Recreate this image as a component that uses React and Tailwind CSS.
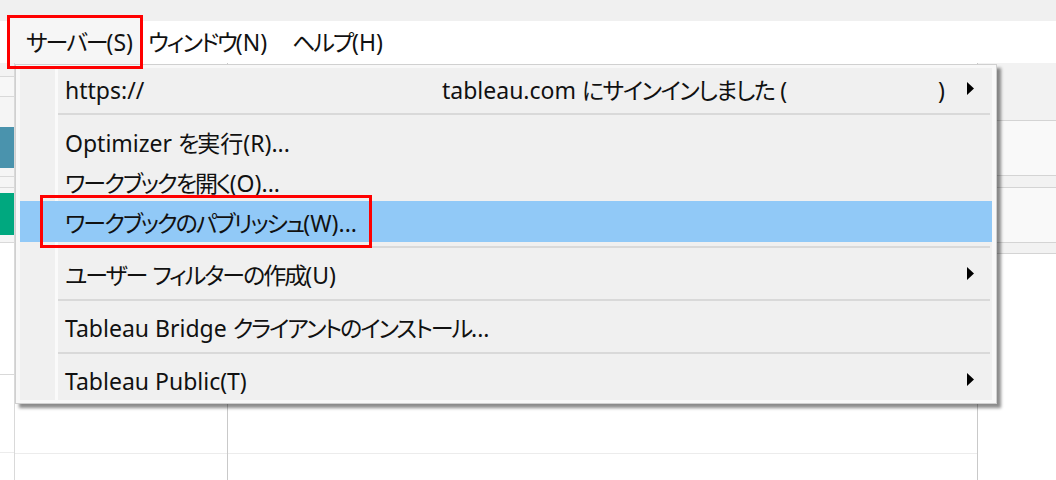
const Arrow = () => (
  <svg width="8" height="13" viewBox="0 0 8 13" className="ml-auto mr-[17px] shrink-0">
    <polygon points="0,0 7,6.5 0,13" fill="#000" />
  </svg>
);

// kana in the Windows UI font sit tighter than Noto's full-width ones
const J = ({ children }) => <span className="tracking-[-2px]">{children}</span>;

const Gutter = () => (
  <>
    <div className="w-[35px] self-stretch shrink-0" />
    <div className="w-[3px] self-stretch shrink-0 bg-[#fafafa]" />
  </>
);

const Item = ({ children, h, sub, active }) => (
  <div className={`flex items-center ${h} ${active ? "bg-[#91c9f7]" : ""}`}>
    {active ? <div className="w-[38px] shrink-0" /> : <Gutter />}
    <span className="pl-[7px] pt-[3px] whitespace-nowrap">{children}</span>
    {sub && <Arrow />}
  </div>
);

const Sep = ({ h, pt }) => (
  <div className={`flex ${h}`}>
    <Gutter />
    <div className={`flex-1 ${pt} pr-[2px]`}>
      <div className="h-[2px] bg-[#d9d9d9]" />
    </div>
  </div>
);

export default function App() {
  return (
    <div className="relative w-[1056px] h-[480px] overflow-hidden bg-white text-[23px] leading-none text-[#111] font-['Noto_Sans','Noto_Sans_CJK_JP',sans-serif] [font-feature-settings:'palt']">
      <div className="h-[21px] bg-[#f0f0f0]" />

      {/* menu bar */}
      <div className="flex h-[42px] items-center bg-white">
        <span className="-ml-[8px] w-[8px] overflow-hidden text-[#1d3b6e]">)</span>
        <div className="ml-[10px] flex h-[48px] items-center bg-[#f6f6f6] pl-[16px] pr-[10px]">
          <J>サーバー</J>(S)
        </div>
        <span className="ml-[5px]">
          <J>ウィンドウ</J>(N)
        </span>
        <span className="ml-[25px]">
          <J>ヘルプ</J>(H)
        </span>
      </div>

      {/* app body behind the menu */}
      <div className="flex h-[417px]">
        <div className="flex w-[15px] flex-col border-r border-[#d9d9d9]">
          <div className="h-[14px] border-b border-[#d9d9d9] bg-[#f3f3f3]" />
          <div className="h-[20px] border-b border-[#d9d9d9] bg-[#f7f7f7]" />
          <div className="h-[30px] bg-[#f5f5f5]" />
          <div className="h-[41px] bg-[#4a93ad]" />
          <div className="h-[9px] border-b border-[#d9d9d9] bg-[#f5f5f5]" />
          <div className="h-[11px] border-b border-[#d9d9d9] bg-[#f5f5f5]" />
          <div className="h-[5px] bg-[#f5f5f5]" />
          <div className="h-[42px] bg-[#00a87f]" />
          <div className="h-[8px] border-b border-[#d9d9d9] bg-[#f5f5f5]" />
          <div className="h-[132px] border-b border-[#d9d9d9] bg-white" />
          <div className="h-[78px] border-b border-[#ececec] bg-white" />
        </div>
        <div className="w-[213px] border-r border-[#c9c9c9]">
          <div className="h-[391px] border-b border-[#ececec]" />
        </div>
        <div className="w-[750px] border-r border-[#c9c9c9]">
          <div className="h-[391px] border-b border-[#ececec]" />
        </div>
        <div className="flex flex-1 flex-col">
          <div className="h-[58px] border-b border-[#d4d4d4] bg-[#f2f2f2]" />
          <div className="h-[55px] border-b border-[#d4d4d4] bg-[#f9f9f9]" />
          <div className="h-[12px] border-b border-[#d4d4d4] bg-[#f2f2f2]" />
          <div className="h-[55px] border-b border-[#d4d4d4] bg-[#f9f9f9]" />
          <div className="h-[11px] border-b border-[#d4d4d4] bg-[#f2f2f2]" />
        </div>
      </div>

      {/* server dropdown */}
      <div className="absolute left-[15px] top-[64px] w-[982px] border border-[#d0d0d0] bg-[#f8f8f8] px-[4px] py-[3px] shadow-[4px_4px_3px_rgba(0,0,0,0.45)]">
        <div className="flex flex-col bg-[#f0f0f0]">
          <div className="flex h-[41px] items-center">
            <Gutter />
            <span className="w-[384px] shrink-0 pl-[7px] pt-[3px]">https://</span>
            <span className="w-[496px] shrink-0 pt-[3px] whitespace-nowrap">
              tableau.com <span className="tracking-[-1.5px]">にサインインしました</span> (
            </span>
            <span className="pt-[3px]">)</span>
            <Arrow />
          </div>
          <Sep h="h-[12px]" pt="pt-[4px]" />
          <Item h="h-[41px]">
            Optimizer <J>を</J>実行(R)...
          </Item>
          <Item h="h-[39px]">
            <J>ワークブックを開く</J>(O)...
          </Item>
          <Item h="h-[41px]" active>
            <J>ワークブックのパブリッシュ</J>(W)...
          </Item>
          <Sep h="h-[11px]" pt="pt-[4px]" />
          <Item h="h-[41px]" sub>
            <J>ユーザー</J> <J>フィルターの作成</J>(U)
          </Item>
          <Sep h="h-[12px]" pt="pt-[5px]" />
          <Item h="h-[41px]">
            Tableau Bridge <J>クライアントのインストール</J>...
          </Item>
          <Sep h="h-[12px]" pt="pt-[5px]" />
          <Item h="h-[41px]" sub>
            Tableau Public(T)
          </Item>
        </div>
      </div>

      {/* annotation boxes */}
      <div className="absolute left-[7px] top-[15px] h-[54px] w-[136px] border-[3px] border-[#f00]" />
      <div className="absolute left-[40px] top-[195px] h-[53px] w-[332px] border-[3px] border-[#f00]" />
    </div>
  );
}
